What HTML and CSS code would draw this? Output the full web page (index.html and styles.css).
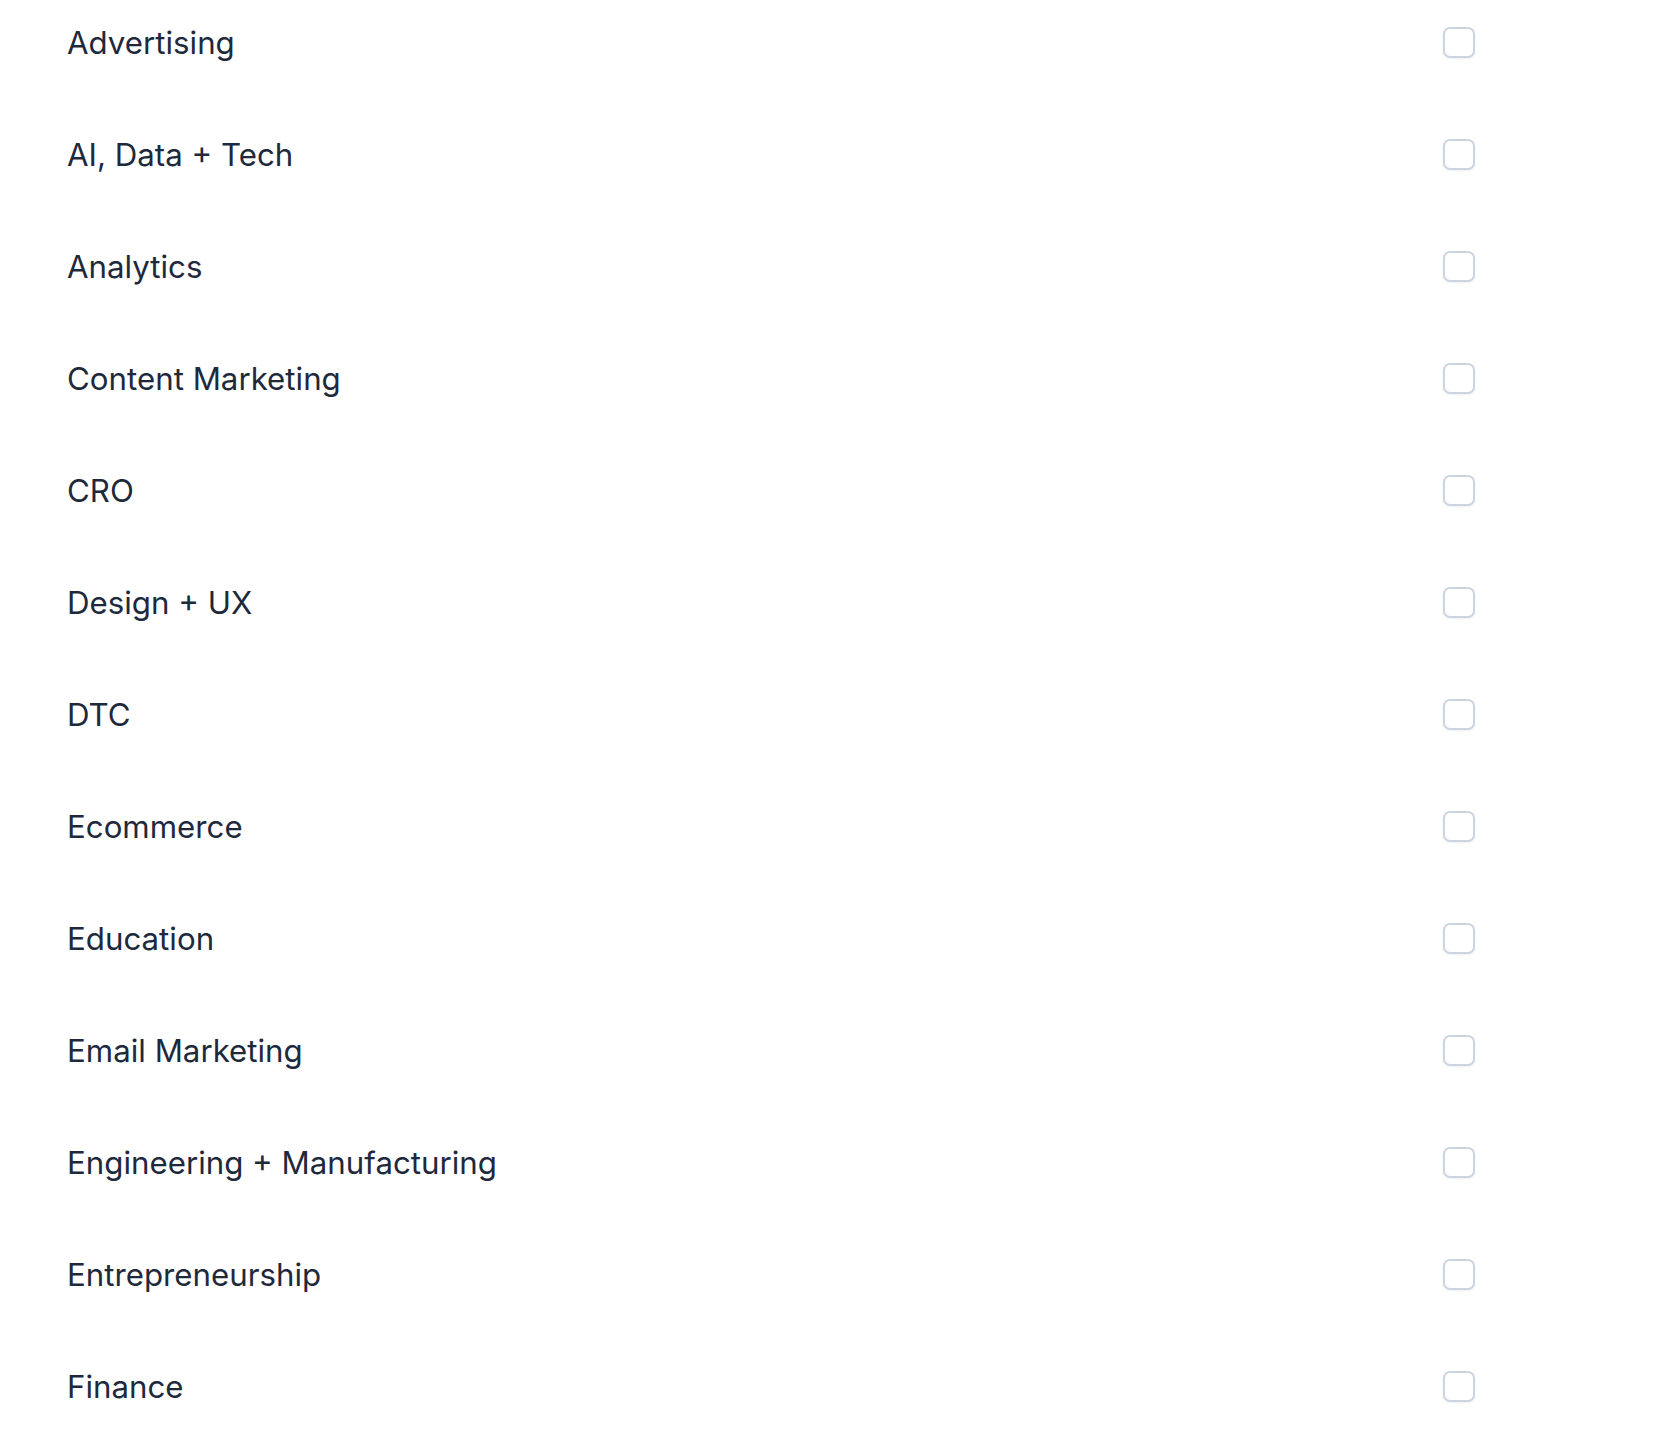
FILE: index.html
```html
<!DOCTYPE html>
<html>
<head>
<meta charset="utf-8">
<link rel="stylesheet" href="styles.css">
</head>
<body>
<ul class="list">
  <li class="row"><span class="label">Advertising</span><span class="box"></span></li>
  <li class="row"><span class="label">AI, Data + Tech</span><span class="box"></span></li>
  <li class="row"><span class="label">Analytics</span><span class="box"></span></li>
  <li class="row"><span class="label">Content Marketing</span><span class="box"></span></li>
  <li class="row"><span class="label">CRO</span><span class="box"></span></li>
  <li class="row"><span class="label">Design + UX</span><span class="box"></span></li>
  <li class="row"><span class="label">DTC</span><span class="box"></span></li>
  <li class="row"><span class="label">Ecommerce</span><span class="box"></span></li>
  <li class="row"><span class="label">Education</span><span class="box"></span></li>
  <li class="row"><span class="label">Email Marketing</span><span class="box"></span></li>
  <li class="row"><span class="label">Engineering + Manufacturing</span><span class="box"></span></li>
  <li class="row"><span class="label">Entrepreneurship</span><span class="box"></span></li>
  <li class="row"><span class="label">Finance</span><span class="box"></span></li>
</ul>
</body>
</html>
```
FILE: styles.css
```css
html, body {
  margin: 0;
  padding: 0;
  background: #ffffff;
}
body {
  font-family: Inter, "Noto Sans", "Liberation Sans", sans-serif;
  color: #1e293b;
}
.list {
  list-style: none;
  margin: 0;
  padding: 0 0 0 67px;
  width: 1408px;
  display: flex;
  flex-direction: column;
  gap: 28px;
}
.row {
  height: 84px;
  display: flex;
  align-items: center;
  justify-content: space-between;
}
.label {
  font-size: 31.25px;
  line-height: 32px;
  padding-top: 2px;
  font-weight: 400;
  letter-spacing: 0;
}
.box {
  width: 32px;
  height: 31px;
  box-sizing: border-box;
  border: 2px solid #cbd5e1;
  border-radius: 7px;
  background: #fff;
  box-shadow: 0 1px 2px rgba(15, 23, 42, 0.06);
}
```
